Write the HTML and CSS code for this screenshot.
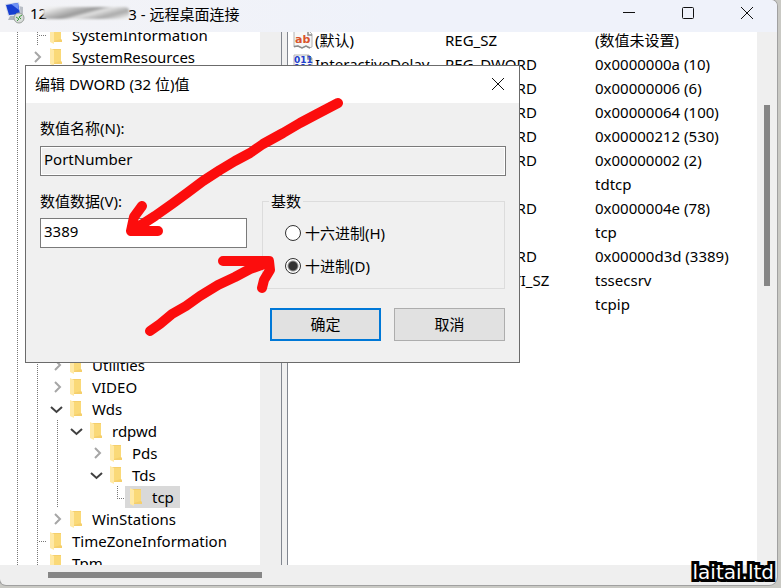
FILE: index.html
```html
<!DOCTYPE html>
<html lang="zh-CN">

<head>
    <meta charset="UTF-8">
    <meta name="viewport" content="width=device-width, initial-scale=1.0">
    <title>远程桌面连接</title>
    <link rel="stylesheet" href="styles.css">
</head>

<body>

    <!-- Shared icons -->
    <svg class="sprite" width="0" height="0">
        <symbol id="folder" viewBox="0 0 14 18">
            <path d="M2 1h10v12l1 1v2H2z" fill="#f5cf6b" />
            <path d="M5 2h7v11l-7 2z" fill="#fad978" />
            <path d="M1 0l4 2v16l-4-2z" fill="#ffe9a6" />
        </symbol>
        <symbol id="closed" viewBox="0 0 14 14">
            <path d="M5 2l5 5-5 5" fill="none" stroke="#a6a6a6" stroke-width="2" />
        </symbol>
        <symbol id="open" viewBox="0 0 14 14">
            <path d="M1 5l5.500 5 5.500-5" fill="none" stroke="#404040" stroke-width="2" />
        </symbol>
        <symbol id="page" viewBox="0 0 20 20">
            <path d="M1 1h15l3 3v13l-3 1-3-2-4 2-4-2-4 1z" fill="#f7f7f7" stroke="#b4b4b4" />
            <path d="M15 1v4h4M1 16.500l4-.5 4 2 4-2 4 2" fill="none" stroke="#8c8c8c" stroke-width="1.500" />
        </symbol>
    </svg>

    <div class="window">
        <!-- Title bar -->
        <header class="titlebar">
            <svg class="app-icon" viewBox="0 0 22 22">
                <path d="M15 4l4 1v11l-4 1z" fill="#b9bec6" />
                <path d="M1 2l14-2 2 13-13 1z" fill="#d5dbe8" />
                <path d="M2 3l12-2 2 11-11 1z" fill="#173ed0" />
                <path d="M7 2l7-1 1 7z" fill="#6e91f5" />
                <path d="M6 14h6l1 4H4z" fill="#aeb4bd" />
                <circle cx="15" cy="16" r="5" fill="#d9ddda" stroke="#9a9f9b" />
                <path d="M12 15l3 2-2 2M18 13l-3 2 2 2" fill="none" stroke="#3d9b3d" />
            </svg>
            <h1>12<span class="smudge"></span>3 - 远程桌面连接</h1>
            <div class="window-buttons">
                <button type="button" aria-label="最小化"><svg viewBox="0 0 14 14"><path d="M1 6.500h12" /></svg></button>
                <button type="button" aria-label="最大化"><svg viewBox="0 0 14 14"><rect x="1.500" y="1.500" width="11" height="11" rx="1" /></svg></button>
                <button type="button" aria-label="关闭"><svg viewBox="0 0 14 14"><path d="M1 1l12 12M13 1L1 13" /></svg></button>
            </div>
        </header>

        <main class="panes">
            <!-- Key tree -->
            <nav class="tree">
                <ul>
                    <li><i class="line"></i><i class="line tee"></i><svg class="folder"><use href="#folder" /></svg><a href="#">SystemInformation</a></li>
                    <li><i class="line"></i><svg class="arrow"><use href="#closed" /></svg><svg class="folder"><use href="#folder" /></svg><a href="#">SystemResources</a></li>
                    <li class="skipped"><i class="line"></i><i class="line"></i></li>
                    <li><i class="line"></i><i class="line"></i><svg class="arrow"><use href="#closed" /></svg><svg class="folder"><use href="#folder" /></svg><a href="#">Utilities</a></li>
                    <li><i class="line"></i><i class="line"></i><svg class="arrow"><use href="#closed" /></svg><svg class="folder"><use href="#folder" /></svg><a href="#">VIDEO</a></li>
                    <li><i class="line"></i><i class="line"></i><svg class="arrow"><use href="#open" /></svg><svg class="folder"><use href="#folder" /></svg><a href="#">Wds</a></li>
                    <li><i class="line"></i><i class="line"></i><i class="line"></i><svg class="arrow"><use href="#open" /></svg><svg class="folder"><use href="#folder" /></svg><a href="#">rdpwd</a></li>
                    <li><i class="line"></i><i class="line"></i><i class="line"></i><i></i><svg class="arrow"><use href="#closed" /></svg><svg class="folder"><use href="#folder" /></svg><a href="#">Pds</a></li>
                    <li><i class="line"></i><i class="line"></i><i class="line"></i><i></i><svg class="arrow"><use href="#open" /></svg><svg class="folder"><use href="#folder" /></svg><a href="#">Tds</a></li>
                    <li><i class="line"></i><i class="line"></i><i class="line"></i><i></i><i></i><i class="elbow"></i><span class="selected"><svg class="folder"><use href="#folder" /></svg><a href="#">tcp</a></span></li>
                    <li><i class="line"></i><i class="line"></i><svg class="arrow"><use href="#closed" /></svg><svg class="folder"><use href="#folder" /></svg><a href="#">WinStations</a></li>
                    <li><i class="line"></i><i class="line tee"></i><svg class="folder"><use href="#folder" /></svg><a href="#">TimeZoneInformation</a></li>
                    <li><i class="line"></i><i class="line"></i><svg class="folder"><use href="#folder" /></svg><a href="#">Tpm</a></li>
                </ul>
            </nav>
            <div class="splitter"></div>

            <!-- Values of the selected key -->
            <section class="values">
                <table>
                    <tr>
                        <td><span class="name"><svg class="value-icon" viewBox="0 0 20 20"><use href="#page" /><text x="2" y="13" class="ab">ab</text></svg>(默认)</span></td>
                        <td>REG_SZ</td>
                        <td>(数值未设置)</td>
                    </tr>
                    <tr>
                        <td><span class="name"><svg class="value-icon" viewBox="0 0 20 20"><use href="#page" /><text x="1" y="9" class="bits">011</text><text x="1" y="17" class="bits">110</text></svg>InteractiveDelay</span></td>
                        <td>REG_DWORD</td>
                        <td>0x0000000a (10)</td>
                    </tr>
                    <tr><td></td><td>REG_DWORD</td><td>0x00000006 (6)</td></tr>
                    <tr><td></td><td>REG_DWORD</td><td>0x00000064 (100)</td></tr>
                    <tr><td></td><td>REG_DWORD</td><td>0x00000212 (530)</td></tr>
                    <tr><td></td><td>REG_DWORD</td><td>0x00000002 (2)</td></tr>
                    <tr><td></td><td></td><td>tdtcp</td></tr>
                    <tr><td></td><td>REG_DWORD</td><td>0x0000004e (78)</td></tr>
                    <tr><td></td><td></td><td>tcp</td></tr>
                    <tr><td></td><td>REG_DWORD</td><td>0x00000d3d (3389)</td></tr>
                    <tr><td></td><td>REG_MULTI_SZ</td><td>tssecsrv</td></tr>
                    <tr><td></td><td></td><td>tcpip</td></tr>
                </table>
            </section>
            <div class="scroll-y"><div class="thumb"></div></div>
        </main>
        <footer class="scroll-x"><div class="thumb"></div></footer>

        <!-- Edit dialog -->
        <form class="dialog">
            <div class="dialog-title">
                <h2>编辑 DWORD (32 位)值</h2>
                <button type="button" aria-label="关闭"><svg viewBox="0 0 14 14"><path d="M1 1l12 12M13 1L1 13" /></svg></button>
            </div>
            <div class="dialog-body">
                <label for="name">数值名称(N):</label>
                <input type="text" id="name" value="PortNumber" readonly>
                <div class="columns">
                    <div class="data">
                        <label for="data">数值数据(V):</label>
                        <input type="text" id="data" value="3389">
                    </div>
                    <fieldset>
                        <legend>基数</legend>
                        <label><input type="radio" name="base">十六进制(H)</label>
                        <label><input type="radio" name="base" checked>十进制(D)</label>
                    </fieldset>
                </div>
                <div class="actions">
                    <button type="button" class="primary">确定</button>
                    <button type="button">取消</button>
                </div>
            </div>
        </form>
    </div>

    <!-- Hand drawn arrows -->
    <svg class="marks" width="360" height="350" viewBox="0 0 360 350">
        <path d="M338 103L317 114 300 123 283 133 263 144 250 153 235 161 220 170 203 181 187 193 172 204 155 216 138 227M142 206L134 217 131 231H158" />
        <path d="M150 331L160 324 172 314 186 306 200 296 218 285 235 277 250 269 267 263M223 261H269L270 270 264 280 262 288" />
    </svg>

    <div class="watermark">laitai.ltd</div>

</body>

</html>
```

FILE: styles.css
```css
* {
    box-sizing: border-box;
}

body {
    font-family: "Noto Sans", "Noto Sans CJK SC", sans-serif;
    font-size: 15px;
    color: #000;
    background-color: #c9c9c4;
    margin: 0;
    height: 100vh;
    padding: 0 4px 3px 0;
    overflow: hidden;
}

h1,
h2 {
    font-size: 15px;
    font-weight: normal;
    margin: 0;
}

button,
input {
    font: inherit;
    color: inherit;
}

.sprite {
    position: absolute;
}

.window {
    position: relative;
    display: flex;
    flex-direction: column;
    height: 100%;
    background-color: #efefef;
    border-radius: 0 6px 8px 6px;
    box-shadow: 0 0 0 1px #a0a0a0;
    overflow: hidden;
}

/* Title bar */
.titlebar {
    display: flex;
    align-items: center;
    flex: none;
    height: 32px;
    padding: 0 1px 6px 4px;
    background: linear-gradient(90deg, #f3f3f6, #eff2fa 50%);
}

.titlebar h1 {
    display: flex;
    align-items: center;
    height: 26px;
    white-space: pre;
}

.app-icon {
    width: 22px;
    height: 22px;
    margin-right: 4px;
}

.smudge {
    width: 86px;
    height: 12px;
    margin: 0 -1px 0 -4px;
    border-radius: 4px;
    background: linear-gradient(165deg, #eee 10%, #bbb 30%, #999 45%, #e2e2e2 55%, #aaa 75%, #eee 95%);
    filter: blur(1px);
}

.window-buttons {
    display: flex;
    margin-left: auto;
}

.window-buttons button,
.dialog-title button {
    display: flex;
    align-items: center;
    justify-content: center;
    width: 59px;
    height: 26px;
    padding: 0;
    border: none;
    background: none;
}

.window-buttons svg,
.dialog-title svg {
    width: 14px;
    height: 14px;
    fill: none;
    stroke: #111;
}

/* Panes */
.panes {
    display: flex;
    flex: 1;
    min-height: 0;
    background-color: #fff;
}

.tree {
    width: 281px;
    flex: none;
    overflow: hidden;
    background: linear-gradient(90deg, #fff 260px, #efefef 260px);
}

.tree ul {
    list-style: none;
    margin: -8px 0 0;
    padding: 0 0 0 7px;
}

.tree li,
.selected {
    display: flex;
    align-items: center;
    height: 22px;
}

.tree li.skipped {
    height: 286px;
}

.tree a {
    color: inherit;
    text-decoration: none;
    white-space: nowrap;
}

.tree i {
    width: 20px;
    height: 100%;
}

.tree .line {
    background: repeating-linear-gradient(#777 0 1px, transparent 1px 2px) 10px 0 / 1px 100% no-repeat;
}

.tree .tee {
    background: repeating-linear-gradient(#777 0 1px, transparent 1px 2px) 10px 0 / 1px 100% no-repeat,
        repeating-linear-gradient(90deg, #777 0 1px, transparent 1px 2px) 12px 11px / 8px 1px no-repeat;
}

.tree .elbow {
    width: 18px;
    background: repeating-linear-gradient(#777 0 1px, transparent 1px 2px) 10px 0 / 1px 12px no-repeat,
        repeating-linear-gradient(90deg, #777 0 1px, transparent 1px 2px) 10px 12px / 8px 1px no-repeat;
}

.arrow {
    width: 14px;
    height: 14px;
    margin: 0 3px;
}

.folder {
    width: 14px;
    height: 18px;
    margin: 0 9px 0 2px;
}

.selected {
    padding: 0 6px 0 2px;
    background-color: #d9d9d9;
}

.splitter {
    flex: none;
    width: 7px;
    border: solid #828790;
    border-width: 0 1px;
    background-color: #f0f0f0;
}

.values {
    flex: 1;
    overflow: hidden;
}

.values table {
    margin-top: -4px;
    border-collapse: collapse;
    table-layout: fixed;
    width: 469px;
}

.values td {
    height: 24px;
    padding: 0;
    line-height: 24px;
    white-space: nowrap;
}

.values td:nth-child(1) {
    width: 157px;
}

.values td:nth-child(2) {
    width: 150px;
}

.name {
    display: flex;
    align-items: center;
    gap: 2px;
    padding-left: 5px;
}

.value-icon {
    width: 20px;
    height: 20px;
}

.value-icon text {
    font-family: "DejaVu Sans", sans-serif;
    font-weight: bold;
}

.ab {
    font-size: 11px;
    fill: #d9532c;
}

.bits {
    font-size: 9px;
    fill: #2440cc;
}

/* Scrollbars */
.thumb {
    background-color: #868686;
}

.scroll-y {
    flex: none;
    width: 20px;
    padding: 73px 7px 0;
    background-color: #efefef;
}

.scroll-y .thumb {
    height: 181px;
}

.scroll-x {
    flex: none;
    height: 20px;
    padding: 7px 48px;
}

.scroll-x .thumb {
    width: 214px;
    height: 6px;
}

/* Dialog */
.dialog {
    position: absolute;
    top: 65px;
    left: 25px;
    width: 495px;
    border: 1px solid #6b6b6b;
    background-color: #f0f0f0;
}

.dialog-title {
    display: flex;
    align-items: center;
    height: 37px;
    padding: 0 0 2px 9px;
    background-color: #fff;
}

.dialog-title button {
    width: 42px;
    margin-left: auto;
}

.dialog-body {
    padding: 13px 14px 21px;
}

.dialog label {
    display: block;
    line-height: 24px;
}

.dialog input[type="text"] {
    display: block;
    width: 100%;
    height: 30px;
    margin-top: 6px;
    padding: 0 3px 4px;
    border: 1px solid #7a7a7a;
    background-color: #fff;
    outline: none;
}

.dialog input[readonly] {
    width: calc(100% + 1px);
    background-color: #f0f0f0;
    box-shadow: inset 0 0 0 1px #fff;
}

.columns {
    display: flex;
    gap: 15px;
    margin-top: 13px;
}

.data {
    width: 207px;
}

.dialog .data input {
    margin-top: 5px;
}

fieldset {
    flex: 1;
    min-width: 0;
    margin: 0;
    padding: 3px 0 6px 22px;
    border: 1px solid #dcdcdc;
}

legend {
    margin-left: -16px;
    padding: 0 2px;
    line-height: 24px;
}

.dialog fieldset label {
    display: flex;
    align-items: center;
    gap: 4px;
    height: 33px;
}

input[type="radio"] {
    appearance: none;
    width: 16px;
    height: 16px;
    margin: 0;
    border: 1px solid #333;
    border-radius: 50%;
    background-color: #fff;
}

input[type="radio"]:checked {
    background: radial-gradient(circle, #333 4px, #fff 6px);
}

.actions {
    display: flex;
    justify-content: flex-end;
    gap: 13px;
    margin-top: 19px;
}

.actions button {
    width: 111px;
    height: 33px;
    padding: 0 0 2px;
    border: 1px solid #adadad;
    background-color: #e1e1e1;
}

.actions .primary {
    border: 2px solid #0078d7;
}

/* Overlays */
.marks {
    position: absolute;
    top: 0;
    left: 0;
    fill: none;
    stroke: #fc0d0d;
    stroke-width: 10;
    stroke-linecap: round;
    stroke-linejoin: round;
    pointer-events: none;
}

.watermark {
    position: absolute;
    right: 7px;
    bottom: 2px;
    font-family: "DejaVu Sans", sans-serif;
    font-size: 20px;
    line-height: 28px;
    color: #fff;
    -webkit-text-stroke: 6px #000;
    paint-order: stroke fill;
}
```
